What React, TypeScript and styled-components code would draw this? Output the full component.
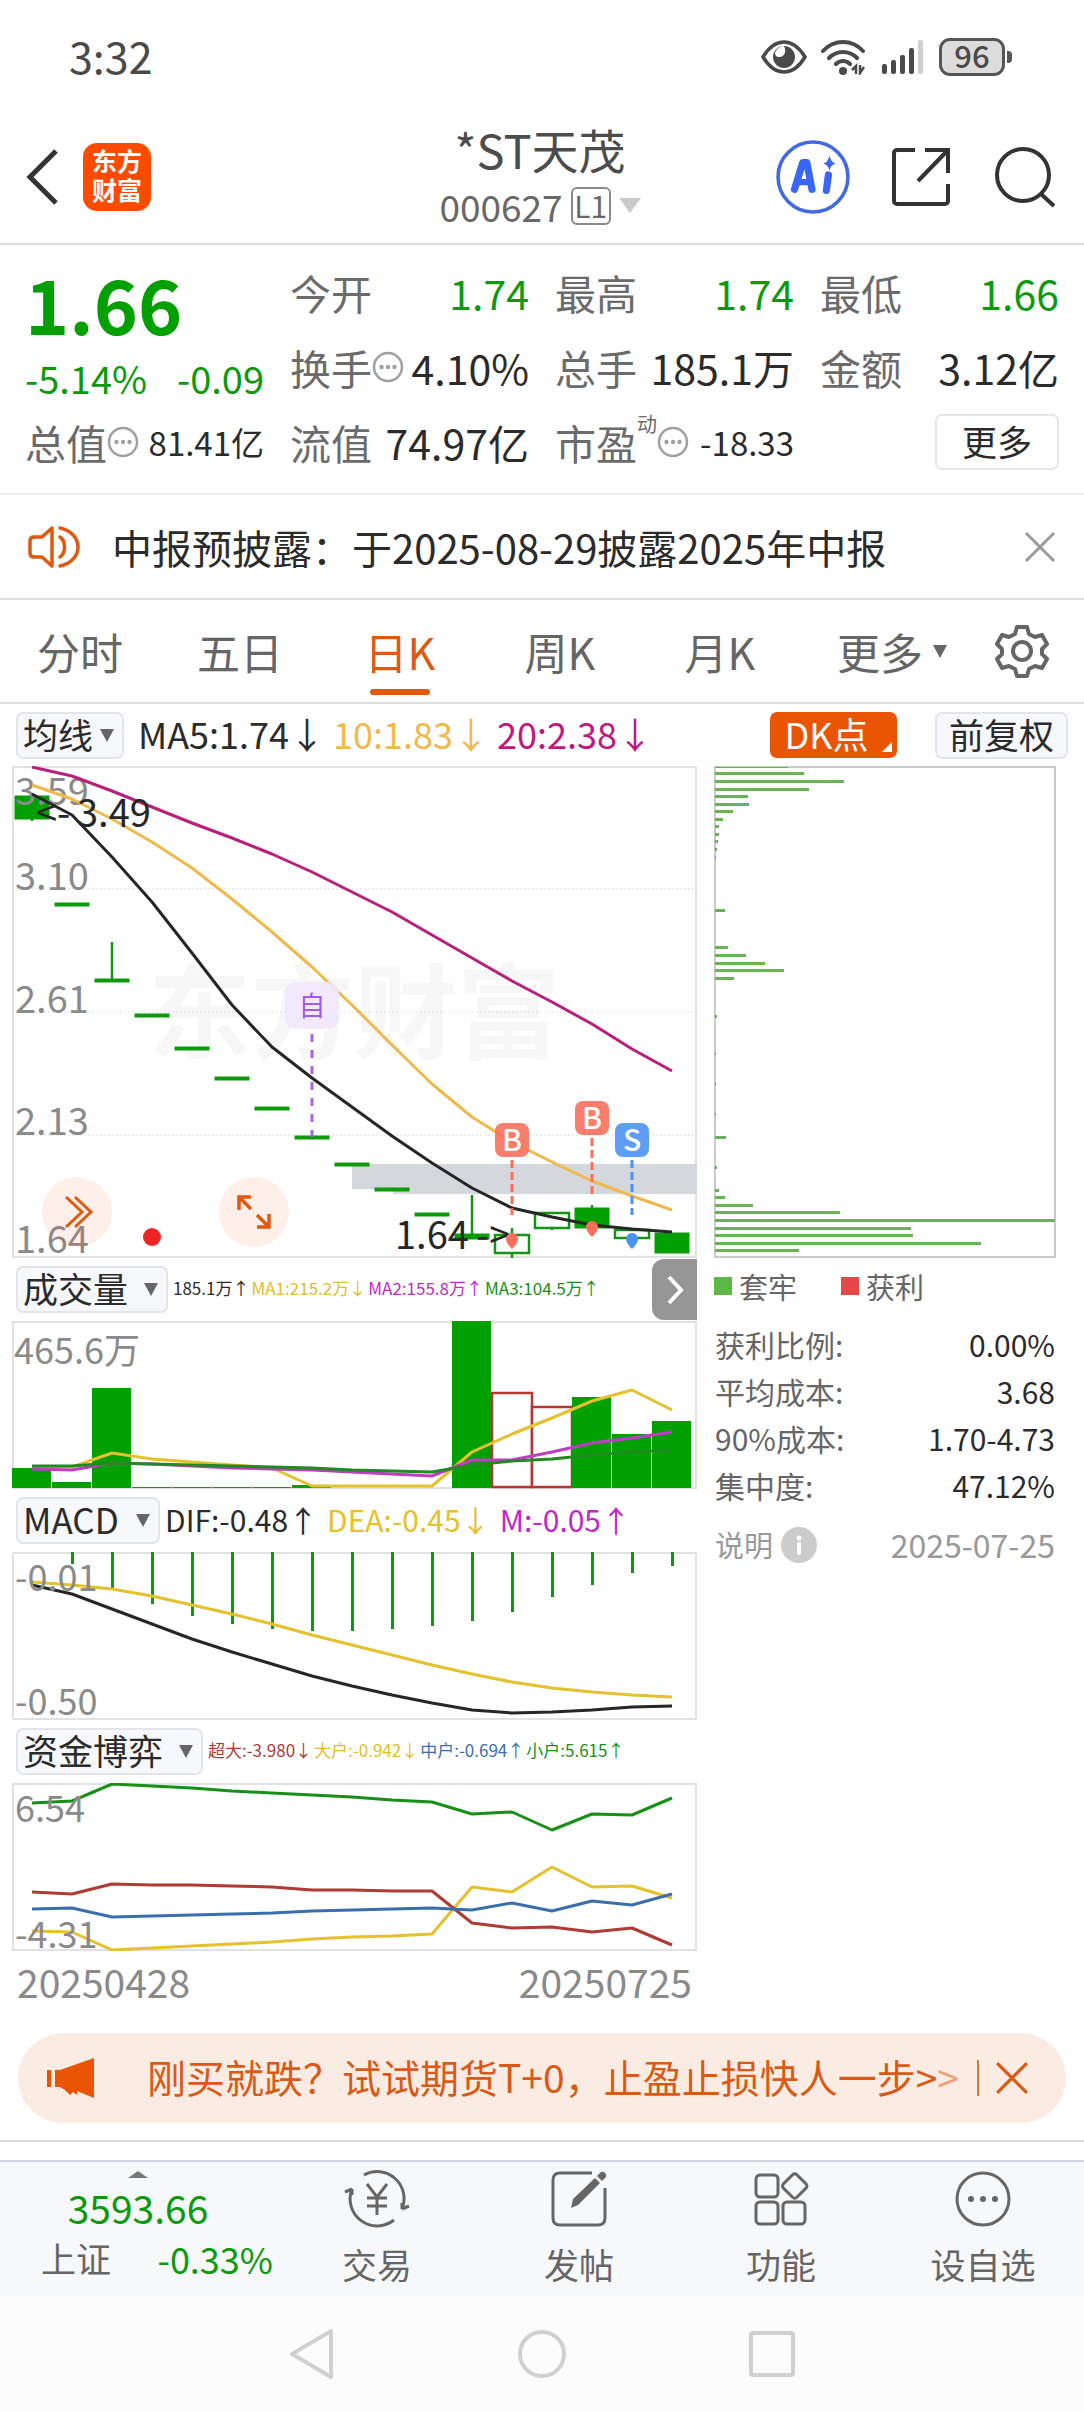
import React from "react";
import styled, { createGlobalStyle } from "styled-components";

const GREEN = "#0c9a0c";
const BAR_GREEN = "#00a000";
const ORANGE = "#e0590f";
const FONT = '"Noto Sans CJK SC", "Noto Sans", sans-serif';

const GlobalStyle = createGlobalStyle`
  *, *::before, *::after { box-sizing: border-box; }
  body { margin: 0; background: #fff; color: #2b2b2b; font-family: ${FONT}; }
  button, select { font: inherit; color: inherit; background: none; border: 0; padding: 0; margin: 0; cursor: pointer; }
  dl, dt, dd, h1, p { margin: 0; font-weight: 400; }
  svg { display: block; flex: none; }
`;

const Screen = styled.div`
  display: flex;
  flex-direction: column;
  white-space: nowrap;
`;

const Row = styled.div<{ $gap?: number }>`
  display: flex;
  align-items: center;
  gap: ${(p) => p.$gap ?? 0}px;
`;

const IconButton = styled.button`
  display: flex;
  align-items: center;
  justify-content: center;
`;

/* status bar */
const StatusBar = styled.div`
  display: flex;
  align-items: center;
  justify-content: space-between;
  height: 110px;
  padding: 3px 72px 0 69px;
  color: #4a4a4a;
`;
const Clock = styled.span`
  padding-bottom: 4px;
  font-size: 43px;
  line-height: 48px;
`;
const Battery = styled.span`
  display: flex;
  align-items: center;
  justify-content: center;
  width: 66px;
  height: 38px;
  padding-bottom: 3px;
  border: 3px solid #555;
  border-radius: 11px;
  background: #dcdcdc;
  font-size: 31px;
  font-weight: 500;
  line-height: 30px;
`;
const BatteryTip = styled.span`
  width: 5px;
  height: 12px;
  margin-left: 2px;
  border-radius: 0 4px 4px 0;
  background: #555;
`;

/* header */
const Header = styled.header`
  display: grid;
  grid-template-columns: 1fr auto 1fr;
  align-items: center;
  height: 135px;
  padding: 0 28px 0 24px;
  border-bottom: 2px solid #dcdcdc;
`;
const Logo = styled.span`
  display: grid;
  align-content: center;
  justify-content: center;
  width: 68px;
  height: 68px;
  padding-bottom: 3px;
  border-radius: 14px;
  background: #ff4a00;
  color: #fff;
  font-size: 25px;
  font-weight: 700;
  line-height: 29px;
`;
const TitleBlock = styled.div`
  display: flex;
  flex-direction: column;
  align-items: center;
  color: #4c4c4c;
`;
const Title = styled.h1`
  font-size: 47px;
  line-height: 58px;
`;
const CodeButton = styled.button`
  display: flex;
  align-items: center;
  gap: 8px;
  color: #686868;
  font-size: 37px;
  line-height: 56px;
`;
const Level = styled.span`
  width: 40px;
  height: 38px;
  border: 2px solid #8a8a8a;
  border-radius: 6px;
  font-size: 30px;
  line-height: 32px;
  text-align: center;
`;
const HeaderActions = styled.div`
  display: flex;
  align-items: center;
  justify-content: flex-end;
  gap: 42px;
`;

/* quote */
const Quote = styled.section`
  display: grid;
  grid-template-columns: repeat(4, minmax(0, 1fr));
  grid-template-rows: repeat(3, 75px);
  column-gap: 26px;
  padding: 9px 25px 14px;
  border-bottom: 2px solid #efefef;
`;
const PriceCell = styled.div`
  grid-row: span 2;
  color: ${GREEN};
`;
const Price = styled.div`
  color: ${BAR_GREEN};
  font-size: 75px;
  font-weight: 700;
  line-height: 98px;
`;
const Change = styled.div`
  display: flex;
  justify-content: space-between;
  font-size: 38px;
  line-height: 52px;
`;
const Stat = styled.dl`
  display: flex;
  align-items: center;
  justify-content: space-between;
  line-height: 56px;
`;
const StatName = styled.dt`
  display: flex;
  align-items: center;
  color: #6b6b6b;
  font-size: 41px;
`;
const StatValue = styled.dd<{ $down?: boolean; $small?: boolean }>`
  color: ${(p) => (p.$down ? GREEN : "#2b2b2b")};
  font-size: ${(p) => (p.$small ? 33 : 41)}px;
`;
const Super = styled.sup`
  align-self: flex-start;
  font-size: 20px;
  line-height: 20px;
  vertical-align: baseline;
`;
const MoreButton = styled.button`
  align-self: center;
  justify-self: end;
  width: 124px;
  height: 56px;
  padding-bottom: 2px;
  border: 2px solid #e6e6e6;
  border-radius: 7px;
  font-size: 35px;
  line-height: 48px;
`;

/* notice */
const Notice = styled.section`
  display: flex;
  align-items: center;
  height: 105px;
  padding: 0 28px;
  border-bottom: 2px solid #dcdcdc;
`;
const NoticeText = styled.p`
  flex: 1;
  padding-left: 32px;
  font-size: 40px;
  line-height: 56px;
`;

/* period tabs */
const Tabs = styled.nav`
  display: grid;
  grid-template-columns: repeat(5, 160fr) 184fr 76fr;
  height: 104px;
  padding-right: 24px;
  border-bottom: 2px solid #dcdcdc;
`;
const Tab = styled.button<{ $active?: boolean }>`
  position: relative;
  display: flex;
  align-items: center;
  justify-content: center;
  gap: 10px;
  color: ${(p) => (p.$active ? ORANGE : "#666")};
  font-size: 43px;
  line-height: 60px;
  &::after {
    content: "";
    display: ${(p) => (p.$active ? "block" : "none")};
    position: absolute;
    bottom: 7px;
    width: 60px;
    height: 6px;
    border-radius: 3px;
    background: ${ORANGE};
  }
`;

/* chart header bars */
const Toolbar = styled.div`
  display: flex;
  align-items: center;
  height: 62px;
  padding: 0 16px;
`;
const PickerBox = styled.label<{ $gap: number }>`
  display: flex;
  flex: none;
  align-items: center;
  gap: ${(p) => p.$gap}px;
  height: 47px;
  padding: 0 8px 0 5px;
  border: 2px solid #e3e5ea;
  border-radius: 7px;
  background: #f6f8fb;
  font-size: 35px;
  select { appearance: none; height: 43px; padding-bottom: 4px; line-height: 39px; }
`;
const Readings = styled.div<{ $size: number; $gap: number }>`
  display: flex;
  gap: ${(p) => p.$gap}px;
  padding-bottom: 4px;
  font-size: ${(p) => p.$size}px;
  line-height: 44px;
`;
const Reading = styled.span<{ $color: string }>`
  color: ${(p) => p.$color};
`;
const MaReadings = styled.div`
  flex: 1;
  padding-left: 14px;
`;
const DkButton = styled.button`
  position: relative;
  width: 127px;
  height: 46px;
  margin-right: 38px;
  padding: 0 14px 4px 0;
  border-radius: 7px;
  background: #ea5504;
  color: #fff;
  font-size: 36px;
  line-height: 42px;
  &::after {
    content: "";
    position: absolute;
    right: 5px;
    bottom: 6px;
    border: 5px solid transparent;
    border-right-color: #fff;
    border-bottom-color: #fff;
  }
`;
const AdjustButton = styled.button`
  width: 133px;
  height: 47px;
  padding-bottom: 4px;
  border: 2px solid #e3e5ea;
  border-radius: 7px;
  background: #f6f8fb;
  font-size: 35px;
  line-height: 39px;
`;

const Charts = styled.main`
  display: grid;
  grid-template-columns: minmax(0, 685fr) minmax(0, 342fr);
  column-gap: 17px;
  padding: 0 28px 0 12px;
`;
const Canvas = styled.svg`
  width: 100%;
  height: auto;
  font-family: ${FONT};
`;
const ChartFrame = styled.div`
  position: relative;
`;
const FloatingTools = styled.div`
  position: absolute;
  left: 30px;
  bottom: 11px;
  display: flex;
  gap: 107px;
`;
const RoundButton = styled(IconButton)`
  width: 70px;
  height: 70px;
  border-radius: 50%;
  background: rgba(245, 110, 40, 0.1);
`;
const PanelHead = styled.div`
  display: flex;
  align-items: center;
  gap: 5px;
  height: 63px;
  padding-left: 4px;
`;
const CollapseButton = styled(IconButton)`
  align-self: stretch;
  width: 45px;
  margin: 1px 0 1px auto;
  border-radius: 12px 0 0 12px;
  background: #969696;
`;
const Dates = styled.div`
  display: flex;
  justify-content: space-between;
  padding: 0 5px;
  color: #8a8a8a;
  font-size: 39px;
  line-height: 60px;
`;

/* cost distribution */
const Legend = styled.div`
  display: flex;
  gap: 44px;
  padding-top: 5px;
  color: #666;
  font-size: 29px;
  line-height: 46px;
`;
const LegendItem = styled.span<{ $color: string }>`
  display: flex;
  align-items: center;
  gap: 7px;
  &::before {
    content: "";
    width: 18px;
    height: 18px;
    background: ${(p) => p.$color};
  }
`;
const CostList = styled.dl`
  padding: 12px 1px 0;
  font-size: 30px;
  line-height: 47px;
`;
const CostRow = styled.div`
  display: flex;
  justify-content: space-between;
  dt { color: #666; }
`;
const CostFoot = styled.div`
  display: flex;
  align-items: center;
  justify-content: space-between;
  padding: 12px 1px 0;
  color: #999;
  font-size: 29px;
  line-height: 47px;
`;
const CostDate = styled.time`
  font-size: 32px;
`;

/* promo */
const Promo = styled.section`
  display: flex;
  align-items: center;
  height: 90px;
  margin: 22px 18px 17px;
  padding: 0 37px 0 28px;
  border-radius: 45px;
  background: #fbece3;
  color: #d95a17;
`;
const PromoLink = styled.a`
  display: flex;
  flex: 1;
  align-items: center;
  padding: 0 0 4px 51px;
  color: inherit;
  font-size: 39px;
  line-height: 56px;
  text-decoration: none;
`;
const Fade = styled.span`
  opacity: 0.5;
`;
const Divider = styled.span`
  width: 2px;
  height: 36px;
  margin-right: 16px;
  background: #d9763f;
`;

/* bottom bars */
const BottomBar = styled.nav`
  display: grid;
  grid-template-columns: 276fr repeat(4, 202fr);
  height: 136px;
  border-top: 2px solid #d3d6de;
  background: #f6f8fa;
  color: #666;
`;
const Spacer = styled.div`
  height: 20px;
  border-top: 2px solid #dcdcdc;
`;
const IndexButton = styled.button`
  display: flex;
  flex-direction: column;
  align-items: center;
  padding-top: 9px;
  color: ${GREEN};
  font-size: 39px;
  line-height: 58px;
`;
const IndexRow = styled.span`
  display: flex;
  align-self: flex-end;
  justify-content: space-between;
  width: 232px;
  margin-right: 3px;
  font-size: 36px;
  line-height: 44px;
`;
const IndexName = styled.span`
  color: #666;
  font-size: 35px;
`;
const NavItem = styled.button`
  display: flex;
  flex-direction: column;
  align-items: center;
  padding-top: 7px;
  font-size: 35px;
  line-height: 70px;
`;
const SystemNav = styled.div`
  display: flex;
  justify-content: center;
  gap: 182px;
  height: 116px;
  background: #fcfcfc;
`;

const Triangle = ({ w, h, color, up }: { w: number; h: number; color: string; up?: boolean }) => (
  <svg width={w} height={h} viewBox="0 0 10 10" preserveAspectRatio="none" aria-hidden="true">
    <path d={up ? "M0 10H10L5 0z" : "M0 0H10L5 10z"} fill={color} />
  </svg>
);

const Dots = () => (
  <svg width="32" height="32" viewBox="0 0 32 32" aria-hidden="true">
    <circle cx="16" cy="16" r="14" fill="none" stroke="#a0a0a0" strokeWidth="2.5" />
    <g fill="#a0a0a0"><circle cx="9.500" cy="16" r="2.200" /><circle cx="16" cy="16" r="2.200" /><circle cx="22.500" cy="16" r="2.200" /></g>
  </svg>
);

const Cross = ({ size, color, width }: { size: number; color: string; width: number }) => (
  <svg width={size} height={size} viewBox="0 0 32 32" aria-hidden="true">
    <path d="M2 2L30 30M30 2L2 30" stroke={color} strokeWidth={width} fill="none" />
  </svg>
);

const Picker = ({ name, value, gap }: { name: string; value: string; gap: number }) => (
  <PickerBox $gap={gap}>
    <select aria-label={name} defaultValue={value}>
      <option>{value}</option>
    </select>
    <Triangle w={14} h={13} color="#666" />
  </PickerBox>
);

/* One trading day takes 40 units across; its centre is at 20. */
const STEP = 40;
const cx = (i: number) => 20 + i * STEP;
const Line = ({ data, color, width = 3 }: { data: number[]; color: string; width?: number }) => (
  <polyline points={data.map((y, i) => `${cx(i)},${y}`).join(" ")} fill="none" stroke={color} strokeWidth={width} strokeLinejoin="round" />
);
const Frame = ({ h }: { h: number }) => (
  <rect x="1" y="1" width="683" height={h - 2} fill="none" stroke="#e2e2e2" strokeWidth="2" />
);

const MA20 = [1, 10, 25, 41, 57, 72, 88, 106, 126, 146, 169, 192, 215, 236, 258, 283, 305];
const MA10 = [19, 33, 53, 76, 102, 133, 166, 201, 239, 279, 318, 351, 376, 396, 415, 430, 444];
const MA5 = [28, 49, 91, 136, 187, 239, 281, 312, 341, 370, 397, 422, 442, 451, 459, 463, 466];

type Candle = { top: number; bottom: number; high?: number; low?: number; hollow?: boolean };
const CANDLES: Candle[] = [
  { top: 30, bottom: 53, low: 55 },
  { top: 137, bottom: 140 },
  { top: 213, bottom: 216, high: 176 },
  { top: 248, bottom: 251 },
  { top: 281, bottom: 284 },
  { top: 311, bottom: 314 },
  { top: 341, bottom: 344 },
  { top: 370, bottom: 373 },
  { top: 397, bottom: 400 },
  { top: 422, bottom: 425 },
  { top: 447, bottom: 450 },
  { top: 468, bottom: 473, high: 429 },
  { top: 469, bottom: 487, high: 462, low: 492, hollow: true },
  { top: 447, bottom: 462, low: 464, hollow: true },
  { top: 442, bottom: 462, high: 439, low: 469 },
  { top: 464, bottom: 472, low: 482, hollow: true },
  { top: 467, bottom: 487 },
];

const Trade = ({ day, y, end, dot, mark, color }: { day: number; y: number; end: number; dot: number; mark: string; color: string }) => {
  const x = cx(day);
  return (
    <g>
      <line x1={x} x2={x} y1={y + 20} y2={end} stroke={color} strokeWidth="3" strokeDasharray="8 4" />
      <rect x={x - 17} y={y - 17} width="34" height="34" rx="8" fill={color} fillOpacity="0.9" />
      <text x={x} y={y + 11} fontSize="30" fontWeight="500" fill="#fff" textAnchor="middle">{mark}</text>
      <path d={`M${x - 6} ${dot - 1}a6 6 0 0 1 12 0q0 4 -6 10q-6 -6 -6 -10z`} fill={color} />
    </g>
  );
};

const PriceChart = () => (
  <Canvas viewBox="0 0 685 492" role="img" aria-label="日K">
    <text x="136" y="285" fontSize="103" fontWeight="700" fill="#f7f7f7">东方财富</text>
    <Frame h={492} />
    {[123, 246, 369].map((y) => (
      <line key={y} x1="0" x2="685" y1={y} y2={y} stroke="#dcdcdc" strokeDasharray="2 2" />
    ))}
    <path d="M340 398H685V428H381V423H340z" fill="#d4d7dc" />
    {CANDLES.map((c, i) => (
      <g key={i} stroke="#149414" strokeWidth="2.500">
        <line x1={cx(i)} x2={cx(i)} y1={c.high ?? c.top} y2={c.low ?? c.bottom} />
        <rect x={cx(i) - 17} y={c.top} width="34" height={c.bottom - c.top} fill={c.hollow ? "#fff" : BAR_GREEN} strokeWidth={c.hollow ? 2.5 : 1} />
      </g>
    ))}
    <g fontSize="38" fill="#8a8a8a">
      <text x="3" y="39">3.59</text>
      <text x="3" y="124">3.10</text>
      <text x="3" y="247">2.61</text>
      <text x="3" y="369">2.13</text>
      <text x="3" y="487">1.64</text>
    </g>
    <Line data={MA20} color="#b8207c" />
    <Line data={MA10} color="#f0b94c" />
    <Line data={MA5} color="#262626" />
    <g fontSize="38" fill="#262626">
      <text y="61"><tspan x="24">&lt;-</tspan><tspan x="65">3.49</tspan></text>
      <text y="483"><tspan x="383">1.64</tspan><tspan x="464">-&gt;</tspan></text>
    </g>
    <line x1="300" x2="300" y1="268" y2="371" stroke="#a764ea" strokeWidth="3" strokeDasharray="8 8" />
    <rect x="273" y="216" width="54" height="47" rx="11" fill="#f1e7fd" fillOpacity="0.9" />
    <text x="300" y="250" fontSize="27" fill="#a15ce8" textAnchor="middle">自</text>
    <Trade day={12} y={374} end={449} dot={474} mark="B" color="#f8705c" />
    <Trade day={14} y={352} end={428} dot={462} mark="B" color="#f8705c" />
    <Trade day={15} y={374} end={449} dot={474} mark="S" color="#4a93f2" />
    <circle cx="140" cy="471" r="9" fill="#ef2525" />
  </Canvas>
);

const VOLUMES: [number, number, boolean?][] = [
  [0, 147], [1, 161], [2, 67], [3, 166], [4, 166], [5, 166], [6, 166], [7, 164], [11, 0],
  [12, 72, true], [13, 86, true], [14, 76], [15, 113], [16, 100],
];
const VOL1 = [146, 146, 132, 138, 141, 144, 147, 165, 165, 165, 165, 131, 113, 97, 80, 69, 89];
const VOL2 = [148, 149, 142, 143, 145, 147, 148, 149, 151, 153, 155, 139, 139, 131, 122, 117, 111];
const VOL3 = [145, 145, 142, 143, 144, 145, 146, 147, 149, 150, 151, 144, 140, 138, 134, 131, 129];

const VolumeChart = () => (
  <Canvas viewBox="0 0 685 168" role="img" aria-label="成交量">
    <Frame h={168} />
    {VOLUMES.map(([i, top, up]) => up ? (
      <rect key={i} x={i * STEP} y={top} width="40" height={166 - top} fill="#fff" stroke="#b93535" strokeWidth="2.500" />
    ) : (
      <rect key={i} x={i * STEP} y={top} width="39" height={167 - top} fill={BAR_GREEN} />
    ))}
    <text x="2" y="43" fontSize="36" fill="#8a8a8a">465.6万</text>
    <Line data={VOL1} color="#e5c12c" />
    <Line data={VOL2} color="#bf3cc4" />
    <Line data={VOL3} color="#228a22" />
  </Canvas>
);

const MACD_BARS = [0, 12, 36, 52, 64, 72, 77, 79, 79, 77, 74, 69, 60, 45, 33, 21, 14];
const DEA = [30, 33, 37, 44, 53, 62, 72, 83, 93, 103, 113, 122, 130, 136, 140, 143, 145];
const DIF = [33, 42, 57, 72, 87, 100, 112, 124, 134, 143, 151, 158, 161, 160, 158, 155, 154];

const MacdChart = () => (
  <Canvas viewBox="0 0 685 168" role="img" aria-label="MACD">
    <Frame h={168} />
    {MACD_BARS.map((h, i) => h > 0 && <rect key={i} x={cx(i) - 1} y="0" width="3" height={h} fill="#149414" />)}
    <Line data={DIF} color="#262626" />
    <Line data={DEA} color="#e5c12c" />
    <g fontSize="36" fill="#8a8a8a">
      <text x="3" y="39">-0.01</text>
      <text x="3" y="163">-0.50</text>
    </g>
  </Canvas>
);

const SMALL = [20, 18, 1, 3, 5, 8, 10, 12, 14, 17, 19, 31, 29, 47, 31, 32, 15];
const HUGE = [109, 111, 101, 102, 102, 103, 104, 107, 107, 108, 108, 140, 145, 144, 149, 145, 162];
const MIDDLE = [126, 125, 134, 133, 132, 131, 130, 128, 127, 126, 125, 127, 120, 128, 118, 122, 111];
const LARGE = [148, 149, 167, 165, 163, 161, 159, 156, 154, 153, 151, 104, 109, 84, 104, 103, 115];

const FundChart = () => (
  <Canvas viewBox="0 0 685 168" role="img" aria-label="资金博弈">
    <Frame h={168} />
    <Line data={LARGE} color="#e5c12c" />
    <Line data={HUGE} color="#b03a34" />
    <Line data={MIDDLE} color="#3a6fae" />
    <Line data={SMALL} color="#169016" />
    <g fontSize="36" fill="#8a8a8a">
      <text x="3" y="39">6.54</text>
      <text x="3" y="165">-4.31</text>
    </g>
  </Canvas>
);

const COSTS = [
  [0, 73], [6, 89], [14, 129], [22, 94], [29, 33], [37, 34], [44, 18], [52, 8], [59, 4], [67, 4], [74, 3], [82, 2], [90, 1],
  [143, 10], [180, 13], [188, 31], [196, 50], [203, 69], [211, 19], [249, 2], [286, 1], [317, 1], [347, 1], [370, 11],
  [400, 2], [423, 4], [430, 10], [438, 38], [445, 125], [453, 340], [461, 196], [468, 198], [476, 266], [483, 84],
];

const CostChart = () => (
  <Canvas viewBox="0 0 342 492" role="img" aria-label="筹码分布">
    <rect x="1" y="1" width="340" height="490" fill="none" stroke="#cacaca" strokeWidth="2" />
    {COSTS.map(([y, w]) => <rect key={y} x="1" y={y + (y ? 0 : 1)} width={w} height={y ? 3 : 1} fill="#67b356" />)}
  </Canvas>
);

const MetricCell = ({ name, value, dots, sup, down, small }: { name: string; value: string; dots?: boolean; sup?: string; down?: boolean; small?: boolean }) => (
  <Stat>
    <StatName>{name}{sup && <Super>{sup}</Super>}{dots && <Dots />}</StatName>
    <StatValue $down={down} $small={small}>{value}</StatValue>
  </Stat>
);

export default function App() {
  return (
    <Screen>
      <GlobalStyle />
      <StatusBar>
        <Clock>3:32</Clock>
        <Row $gap={14}>
          <svg width="46" height="34" viewBox="0 0 46 34" aria-hidden="true">
            <path d="M2 17C8 7 15 2 23 2s15 5 21 15C38 27 31 32 23 32S8 27 2 17z" fill="none" stroke="#4a4a4a" strokeWidth="3.500" />
            <circle cx="23" cy="17" r="11" fill="#4a4a4a" />
            <path d="M23 6c3 6 0 11-5 11-3 0-4-2-4-4 1-4 5-7 9-7z" fill="#fff" />
          </svg>
          <svg width="46" height="36" viewBox="0 0 46 36" aria-hidden="true">
            <g fill="none" stroke="#4a4a4a" strokeWidth="4" strokeLinecap="round">
              <path d="M2 12C13 0 31 0 42 12M8 19c8-8 20-8 28 0M15 25c4-4 10-4 14 0" />
            </g>
            <circle cx="22" cy="32" r="4" fill="#4a4a4a" />
            <path d="M31 31l4-4v8M43 28l-4 6v-8" fill="none" stroke="#4a4a4a" strokeWidth="2.500" />
          </svg>
          <svg width="44" height="36" viewBox="0 0 44 36" aria-hidden="true">
            <g fill="#4a4a4a">
              <rect x="1" y="25" width="5" height="10" rx="2" /><rect x="10" y="21" width="5" height="14" rx="2" />
              <rect x="19" y="16" width="5" height="19" rx="2" /><rect x="28" y="9" width="5" height="26" rx="2" />
            </g>
            <rect x="37" y="1" width="5" height="34" rx="2" fill="#cfcfcf" />
          </svg>
          <Row><Battery>96</Battery><BatteryTip /></Row>
        </Row>
      </StatusBar>

      <Header>
        <Row $gap={23}>
          <IconButton aria-label="返回">
            <svg width="36" height="58" viewBox="0 0 36 58"><path d="M32 3L6 29l26 26" fill="none" stroke="#333" strokeWidth="5" /></svg>
          </IconButton>
          <Logo><span>东方</span><span>财富</span></Logo>
        </Row>
        <TitleBlock>
          <Title>*ST天茂</Title>
          <CodeButton>
            000627
            <Level>L1</Level>
            <Triangle w={22} h={15} color="#cacaca" />
          </CodeButton>
        </TitleBlock>
        <HeaderActions>
          <IconButton aria-label="AI">
            <svg width="74" height="74" viewBox="0 0 72 72">
              <circle cx="36" cy="36" r="34" fill="none" stroke="#4169e6" strokeWidth="3.500" />
              <g fill="none" stroke="#3a66f5" strokeLinecap="round" strokeLinejoin="round">
                <path d="M18 48L26 22H30L35 48" strokeWidth="7" /><path d="M22 41H33" strokeWidth="6" />
                <path d="M51 34L49 49" strokeWidth="7" />
              </g>
              <path d="M52 15q1 6 6 8-5 1-6 7-1-6-6-7 5-2 6-8z" fill="#3a66f5" />
            </svg>
          </IconButton>
          <IconButton aria-label="分享">
            <svg width="60" height="60" viewBox="0 0 60 60">
              <path d="M23 3H5a3 3 0 0 0-3 3V54a3 3 0 0 0 3 3H53a3 3 0 0 0 3-3V37M33 3H56V26M56 3L26 34" fill="none" stroke="#333" strokeWidth="4" />
            </svg>
          </IconButton>
          <IconButton aria-label="搜索">
            <svg width="62" height="62" viewBox="0 0 62 62">
              <circle cx="29" cy="29" r="26" fill="none" stroke="#333" strokeWidth="4" />
              <path d="M47 48L60 60" stroke="#333" strokeWidth="4" />
            </svg>
          </IconButton>
        </HeaderActions>
      </Header>

      <Quote>
        <PriceCell>
          <Price>1.66</Price>
          <Change><span>-5.14%</span><span>-0.09</span></Change>
        </PriceCell>
        <MetricCell name="今开" value="1.74" down />
        <MetricCell name="最高" value="1.74" down />
        <MetricCell name="最低" value="1.66" down />
        <MetricCell name="换手" value="4.10%" dots />
        <MetricCell name="总手" value="185.1万" />
        <MetricCell name="金额" value="3.12亿" />
        <MetricCell name="总值" value="81.41亿" dots small />
        <MetricCell name="流值" value="74.97亿" />
        <MetricCell name="市盈" sup="动" value="-18.33" dots small />
        <MoreButton>更多</MoreButton>
      </Quote>

      <Notice>
        <svg width="52" height="44" viewBox="0 0 52 44" aria-hidden="true">
          <g fill="none" stroke={ORANGE} strokeWidth="3.500" strokeLinejoin="round">
            <path d="M24 3L14 12H6q-4 0-4 4V28q0 4 4 4h8l10 9z" />
            <path d="M32 12c6 4 6 16 0 20M32 3c24 5 24 33 0 38" strokeLinecap="round" />
          </g>
        </svg>
        <NoticeText>中报预披露：于2025-08-29披露2025年中报</NoticeText>
        <IconButton aria-label="关闭公告"><Cross size={32} color="#999" width={3} /></IconButton>
      </Notice>

      <Tabs>
        <Tab>分时</Tab>
        <Tab>五日</Tab>
        <Tab $active>日K</Tab>
        <Tab>周K</Tab>
        <Tab>月K</Tab>
        <Tab>更多<Triangle w={14} h={13} color="#666" /></Tab>
        <Tab aria-label="设置">
          <svg width="54" height="54" viewBox="0 0 54 54">
            <path d="M22 3h10l2 7 6 3 7-2 5 9-5 5v5l5 5-5 9-7-2-6 3-2 7H22l-2-7-6-3-7 2-5-9 5-5v-5l-5-5 5-9 7 2 6-3z" fill="none" stroke="#666" strokeWidth="4" strokeLinejoin="round" />
            <circle cx="27" cy="27" r="9" fill="none" stroke="#666" strokeWidth="4" />
          </svg>
        </Tab>
      </Tabs>

      <Toolbar>
        <Picker name="均线" value="均线" gap={6} />
        <MaReadings>
          <Readings $size={36} $gap={8}>
            <Reading $color="#2b2b2b">MA5:1.74↓</Reading>
            <Reading $color="#f0b94c">10:1.83↓</Reading>
            <Reading $color="#c0187c">20:2.38↓</Reading>
          </Readings>
        </MaReadings>
        <DkButton>DK点</DkButton>
        <AdjustButton>前复权</AdjustButton>
      </Toolbar>

      <Charts>
        <div>
          <ChartFrame>
            <PriceChart />
            <FloatingTools>
              <RoundButton aria-label="快进">
                <svg width="34" height="34" viewBox="0 0 34 34"><path d="M6 2L22 17 6 32M15 2L31 17 15 32" fill="none" stroke={ORANGE} strokeWidth="3" /></svg>
              </RoundButton>
              <RoundButton aria-label="全屏">
                <svg width="36" height="36" viewBox="0 0 36 36"><path d="M15 3H3V16M3 3L15 15M33 20V33H21M33 33L21 21" fill="none" stroke={ORANGE} strokeWidth="3.500" /></svg>
              </RoundButton>
            </FloatingTools>
          </ChartFrame>
          <PanelHead>
            <Picker name="副图一" value="成交量" gap={15} />
            <Readings $size={17} $gap={2}>
              <Reading $color="#2b2b2b">185.1万↑</Reading>
              <Reading $color="#e3bd25">MA1:215.2万↓</Reading>
              <Reading $color="#c128c6">MA2:155.8万↑</Reading>
              <Reading $color="#169016">MA3:104.5万↑</Reading>
            </Readings>
            <CollapseButton aria-label="收起">
              <svg width="20" height="32" viewBox="0 0 20 32"><path d="M4 3L16 16 4 29" fill="none" stroke="#fff" strokeWidth="4" /></svg>
            </CollapseButton>
          </PanelHead>
          <VolumeChart />
          <PanelHead>
            <Picker name="副图二" value="MACD" gap={17} />
            <Readings $size={30} $gap={9}>
              <Reading $color="#2b2b2b">DIF:-0.48↑</Reading>
              <Reading $color="#e8c02a">DEA:-0.45↓</Reading>
              <Reading $color="#c128c6">M:-0.05↑</Reading>
            </Readings>
          </PanelHead>
          <MacdChart />
          <PanelHead>
            <Picker name="副图三" value="资金博弈" gap={15} />
            <Readings $size={17} $gap={2}>
              <Reading $color="#b03a34">超大:-3.980↓</Reading>
              <Reading $color="#e3bd25">大户:-0.942↓</Reading>
              <Reading $color="#3a6fae">中户:-0.694↑</Reading>
              <Reading $color="#169016">小户:5.615↑</Reading>
            </Readings>
          </PanelHead>
          <FundChart />
          <Dates><time>20250428</time><time>20250725</time></Dates>
        </div>
        <aside>
          <CostChart />
          <Legend>
            <LegendItem $color="#5bb944">套牢</LegendItem>
            <LegendItem $color="#e64848">获利</LegendItem>
          </Legend>
          <CostList>
            <CostRow><dt>获利比例:</dt><dd>0.00%</dd></CostRow>
            <CostRow><dt>平均成本:</dt><dd>3.68</dd></CostRow>
            <CostRow><dt>90%成本:</dt><dd>1.70-4.73</dd></CostRow>
            <CostRow><dt>集中度:</dt><dd>47.12%</dd></CostRow>
          </CostList>
          <CostFoot>
            <Row $gap={8}>
              说明
              <svg width="36" height="36" viewBox="0 0 36 36" aria-hidden="true">
                <circle cx="18" cy="18" r="18" fill="#ccc" />
                <circle cx="18" cy="11" r="2.500" fill="#fff" /><rect x="16" y="15" width="4" height="13" rx="2" fill="#fff" />
              </svg>
            </Row>
            <CostDate>2025-07-25</CostDate>
          </CostFoot>
        </aside>
      </Charts>

      <Promo>
        <svg width="50" height="42" viewBox="0 0 50 42" aria-hidden="true">
          <path d="M1 13H5V30H1zM9 13H14L48 1V41L31 34V38L27 35 24 38 19 33 14 30H9z" fill="#ea5504" />
        </svg>
        <PromoLink href="#promo">刚买就跌？试试期货T+0，止盈止损快人一步&gt;<Fade>&gt;</Fade></PromoLink>
        <Divider />
        <IconButton aria-label="关闭推广"><Cross size={34} color="#d95a17" width={3} /></IconButton>
      </Promo>

      <Spacer />
      <BottomBar>
        <IndexButton>
          <Triangle w={20} h={7} color="#777" up />
          3593.66
          <IndexRow><IndexName>上证</IndexName><span>-0.33%</span></IndexRow>
        </IndexButton>
        <NavItem>
          <svg width="66" height="60" viewBox="0 0 66 60" aria-hidden="true">
            <g fill="none" stroke="#666" strokeWidth="3">
              <path d="M20 6A27 27 0 0 1 58 40V34M58 40L65 37M50 51A27 27 0 0 1 8 20V26M8 20L1 23" />
              <path d="M23 15L33 28 43 15M23 29H43M23 37H43M33 28V46" />
            </g>
          </svg>
          交易
        </NavItem>
        <NavItem>
          <svg width="60" height="60" viewBox="0 0 60 60" aria-hidden="true">
            <path d="M43 4H11Q4 4 4 11V49Q4 56 11 56H49Q56 56 56 49V19" fill="none" stroke="#666" strokeWidth="3" />
            <path d="M22 39L24 30 46 9 51 14 29 36zM48 7L52 3Q54 2 56 4 58 6 57 8L53 12z" fill="#666" />
          </svg>
          发帖
        </NavItem>
        <NavItem>
          <svg width="60" height="60" viewBox="0 0 60 60" aria-hidden="true">
            <g fill="none" stroke="#666" strokeWidth="3" strokeLinejoin="round">
              <rect x="5" y="6" width="22" height="22" rx="4" /><rect x="5" y="33" width="22" height="22" rx="4" />
              <rect x="32" y="33" width="22" height="22" rx="4" />
              <rect x="34" y="7" width="19" height="19" rx="3" transform="rotate(45 43 17)" />
            </g>
          </svg>
          功能
        </NavItem>
        <NavItem>
          <svg width="60" height="60" viewBox="0 0 60 60" aria-hidden="true">
            <circle cx="30" cy="30" r="26" fill="none" stroke="#666" strokeWidth="3" />
            <g fill="#666"><circle cx="18" cy="30" r="3" /><circle cx="30" cy="30" r="3" /><circle cx="42" cy="30" r="3" /></g>
          </svg>
          设自选
        </NavItem>
      </BottomBar>
      <SystemNav>
        <IconButton aria-label="后退">
          <svg width="48" height="52" viewBox="0 0 48 52"><path d="M43 3V49L4 26z" fill="none" stroke="#d0d0d0" strokeWidth="4" strokeLinejoin="round" /></svg>
        </IconButton>
        <IconButton aria-label="主页">
          <svg width="48" height="52" viewBox="0 0 48 52"><circle cx="24" cy="26" r="22" fill="none" stroke="#d0d0d0" strokeWidth="4" /></svg>
        </IconButton>
        <IconButton aria-label="最近任务">
          <svg width="48" height="52" viewBox="0 0 48 52"><rect x="3" y="5" width="42" height="42" rx="2" fill="none" stroke="#d0d0d0" strokeWidth="4" /></svg>
        </IconButton>
      </SystemNav>
    </Screen>
  );
}
